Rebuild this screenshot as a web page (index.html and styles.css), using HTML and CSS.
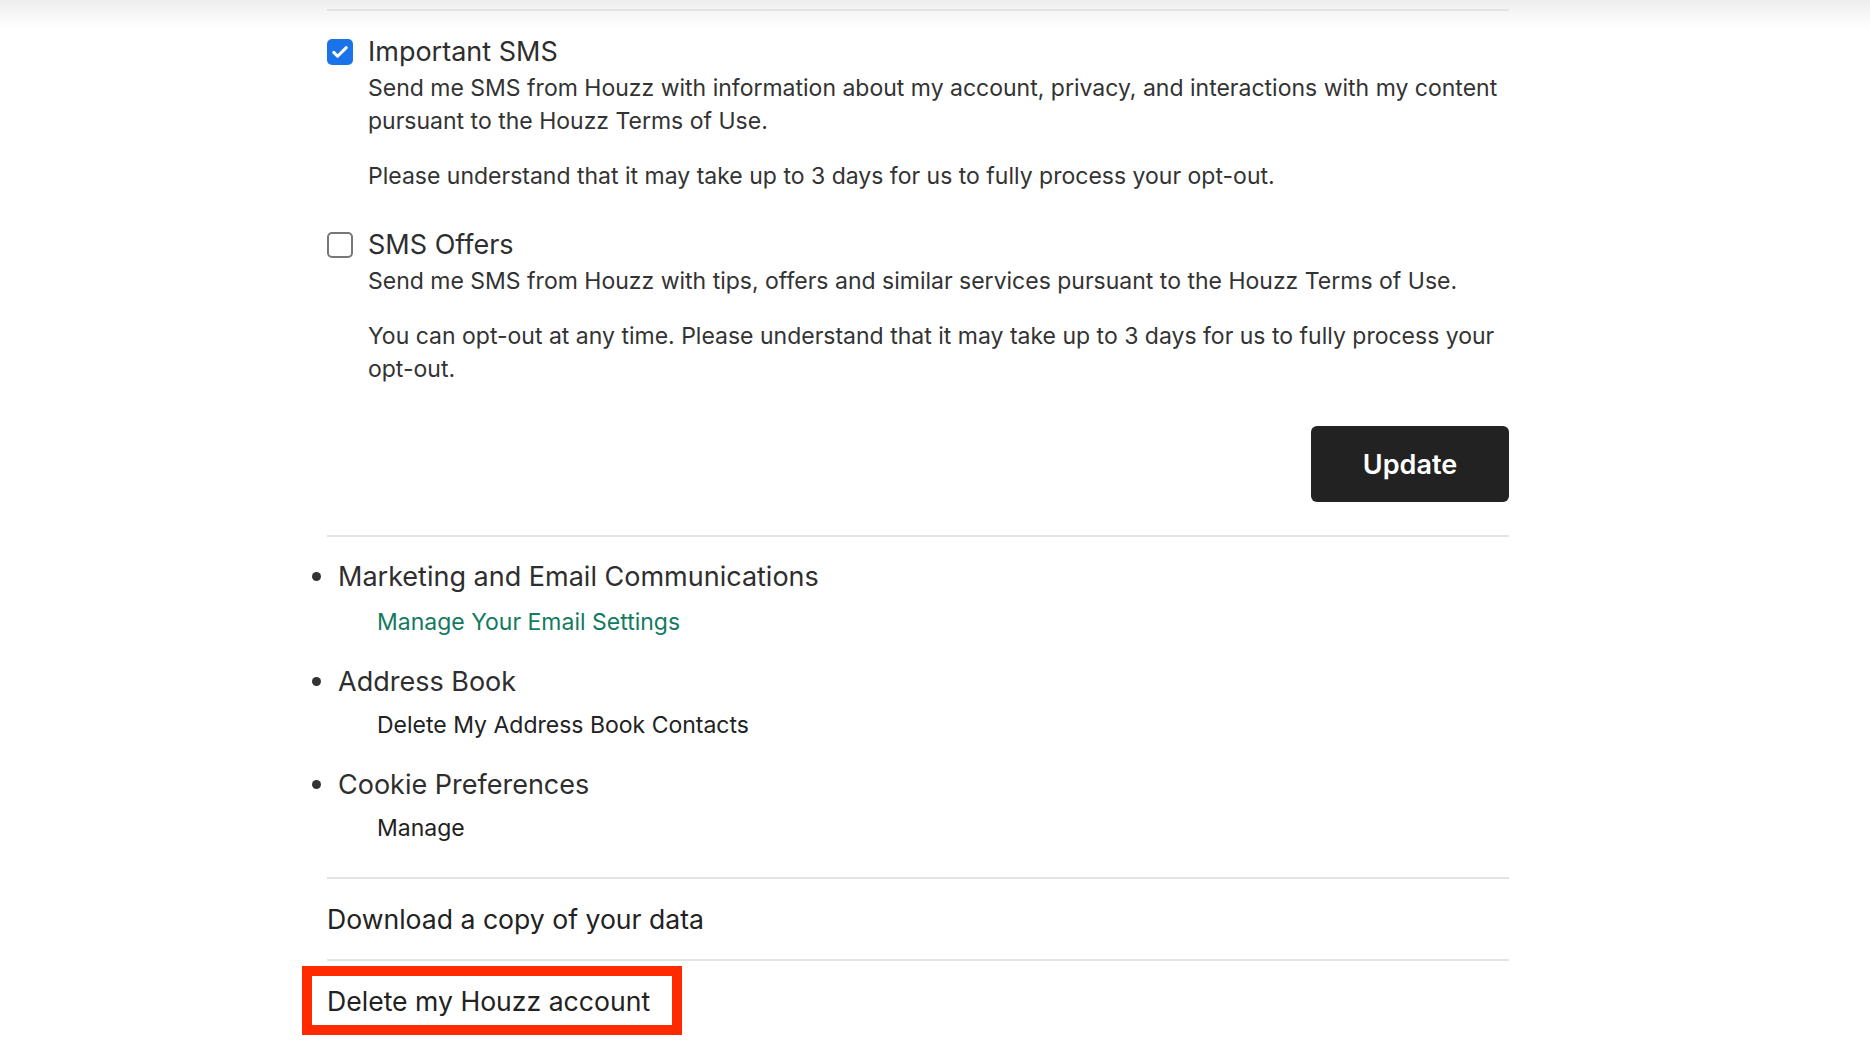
FILE: index.html
```html
<!DOCTYPE html>
<html lang="en">
<head>
<meta charset="utf-8">
<title>Privacy settings</title>
<link rel="stylesheet" href="styles.css">
</head>
<body>
<div class="page">
  <section class="sms-section">
    <div class="sms-option">
      <label class="option-title">
        <span class="check is-checked">
          <svg viewBox="0 0 24 24" width="20" height="20"><path d="M4.5 12.5l4.6 4.6L19.5 6.8" fill="none" stroke="#fff" stroke-width="3.6" stroke-linecap="round" stroke-linejoin="round"/></svg>
        </span>
        <span>Important SMS</span>
      </label>
      <div class="option-body">
        <p>Send me SMS from Houzz with information about my account, privacy, and interactions with my content pursuant to the Houzz Terms of Use.</p>
        <p>Please understand that it may take up to 3 days for us to fully process your opt-out.</p>
      </div>
    </div>

    <div class="sms-option">
      <label class="option-title">
        <span class="check"></span>
        <span>SMS Offers</span>
      </label>
      <div class="option-body">
        <p>Send me SMS from Houzz with tips, offers and similar services pursuant to the Houzz Terms of Use.</p>
        <p>You can opt-out at any time. Please understand that it may take up to 3 days for us to fully process your opt-out.</p>
      </div>
    </div>

    <div class="actions">
      <button class="btn-update" type="button">Update</button>
    </div>
  </section>

  <ul class="settings-list">
    <li>
      <div class="item-title"><span class="dot"></span>Marketing and Email Communications</div>
      <a class="item-link is-green" href="#">Manage Your Email Settings</a>
    </li>
    <li>
      <div class="item-title"><span class="dot"></span>Address Book</div>
      <a class="item-link" href="#">Delete My Address Book Contacts</a>
    </li>
    <li>
      <div class="item-title"><span class="dot"></span>Cookie Preferences</div>
      <a class="item-link" href="#">Manage</a>
    </li>
  </ul>

  <div class="row row-download">
    <a href="#" class="row-link">Download a copy of your data</a>
  </div>
  <div class="row row-delete">
    <a href="#" class="row-link danger">Delete my Houzz account</a>
  </div>
</div>
</body>
</html>
```

FILE: styles.css
```css
* {
  box-sizing: border-box;
}

html, body {
  margin: 0;
  padding: 0;
}

body {
  font-family: Inter, "Noto Sans", "Liberation Sans", sans-serif;
  color: #2b2b2b;
  background: linear-gradient(#eeeeee 0px, #ffffff 28px) no-repeat;
  background-color: #fff;
  min-height: 1044px;
}

.page {
  width: 1182px;
  margin-left: 327px;
  padding-top: 9px;
}

/* SMS opt-in block */
.sms-section {
  border-top: 2px solid #e3e3e3;
  border-bottom: 2px solid #e3e3e3;
  padding-top: 22px;
  padding-bottom: 33px;
}

.sms-option {
  margin-bottom: 33px;
}

.option-title {
  display: flex;
  align-items: center;
  gap: 15px;
  font-size: 27px;
  line-height: 38px;
  color: #2e2e2e;
}

.check {
  width: 26px;
  height: 26px;
  flex: none;
  border: 2px solid #777;
  border-radius: 5px;
  background: #fff;
  display: flex;
  align-items: center;
  justify-content: center;
}

.check.is-checked {
  border: none;
  background: #1a73e8;
}

.option-body {
  padding-left: 41px;
  margin-top: 1px;
  font-size: 23px;
  line-height: 33.4px;
  color: #333;
}

.option-body p {
  margin: 0;
}

.option-body p + p {
  margin-top: 21px;
}

.actions {
  display: flex;
  justify-content: flex-end;
}

.sms-option + .actions {
  margin-top: 40px;
}

.btn-update {
  width: 198px;
  height: 76px;
  border: none;
  border-radius: 6px;
  background: #222;
  color: #fff;
  font-family: inherit;
  font-size: 27px;
  font-weight: 600;
}

/* Account data links */
.settings-list {
  list-style: none;
  margin: 0 0 0 -15px;
  padding: 21px 0 8px;
}

.settings-list li {
  margin-bottom: 24px;
}

.item-title {
  display: flex;
  align-items: center;
  gap: 17px;
  font-size: 27px;
  line-height: 37px;
  color: #2e2e2e;
}

.dot {
  width: 9px;
  height: 9px;
  border-radius: 50%;
  background: #333;
  flex: none;
}

.item-link {
  display: block;
  margin-top: 9px;
  margin-left: 65px;
  font-size: 23px;
  line-height: 33px;
  color: #222;
  text-decoration: none;
}

.item-link.is-green {
  color: #137a5f;
  margin-top: 11px;
}

.row {
  padding: 22px 0 22px;
}

.row-download {
  border-top: 2px solid #e3e3e3;
  border-bottom: 2px solid #e3e3e3;
}

.row-link {
  display: inline-block;
  font-size: 26.6px;
  line-height: 36px;
  color: #222;
  text-decoration: none;
}

.row-link.danger {
  margin: -7px 0 0 -15px;
  padding: 7px 22px 6px 15px;
  outline: 10px solid #ff2a00;
}
```
